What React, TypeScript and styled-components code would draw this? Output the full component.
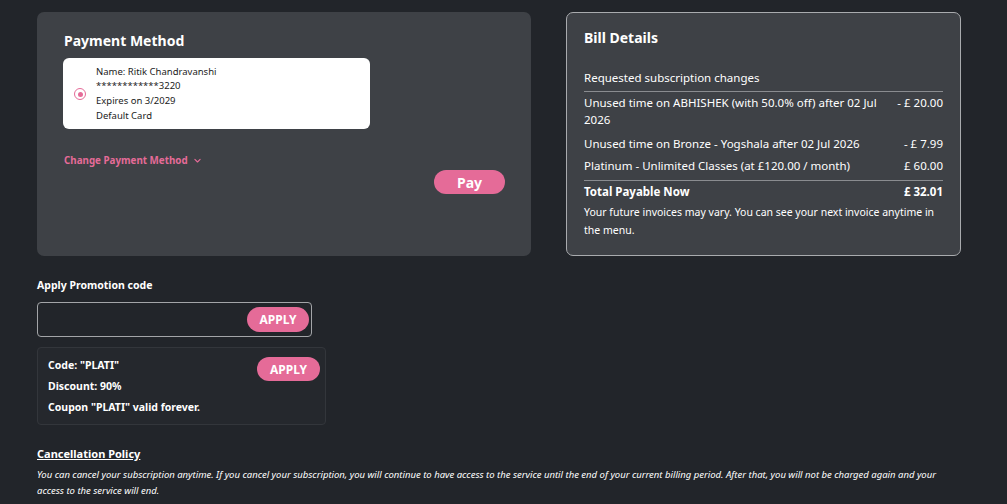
import React from "react";
import styled, { createGlobalStyle } from "styled-components";

const GlobalStyle = createGlobalStyle`
  html, body {
    margin: 0;
    padding: 0;
    background: #22252a;
    font-family: "Noto Sans", "Open Sans", sans-serif;
    color: #ffffff;
  }
`;

const Page = styled.div`
  width: 1007px;
  height: 504px;
  overflow: hidden;
  padding: 12px 0 0 37px;
  box-sizing: border-box;
`;

const TopRow = styled.div`
  display: flex;
  gap: 35px;
  align-items: flex-start;
`;

const PaymentCard = styled.section`
  width: 494px;
  height: 244px;
  box-sizing: border-box;
  background: #3e4146;
  border-radius: 7px;
  padding: 19px 26px 0 27px;
  display: flex;
  flex-direction: column;
`;

const CardTitle = styled.h2`
  margin: 0;
  font-size: 14px;
  font-weight: 700;
  line-height: 20px;
`;

const SavedCard = styled.div`
  margin-top: 7px;
  margin-left: -1px;
  width: 307px;
  height: 71px;
  box-sizing: border-box;
  background: #ffffff;
  border-radius: 6px;
  display: flex;
  align-items: center;
  padding: 1px 0 0 11px;
  color: #1b1b1b;
`;

const Radio = styled.span`
  width: 12px;
  height: 12px;
  border-radius: 50%;
  border: 1.5px solid #e56b98;
  box-sizing: border-box;
  display: flex;
  align-items: center;
  justify-content: center;
  margin-right: 10px;

  &::after {
    content: "";
    width: 5px;
    height: 5px;
    border-radius: 50%;
    background: #e56b98;
  }
`;

const CardLines = styled.div`
  display: flex;
  flex-direction: column;
  font-size: 9.5px;
  line-height: 14.6px;
`;

const ChangeLink = styled.button`
  margin-top: 25px;
  align-self: flex-start;
  background: none;
  border: none;
  padding: 0;
  color: #e56b98;
  font-family: inherit;
  font-size: 9.8px;
  font-weight: 700;
  display: flex;
  align-items: center;
  gap: 5px;
  cursor: pointer;
`;

const PayRow = styled.div`
  display: flex;
  justify-content: flex-end;
  margin-top: 3px;
`;

const PillButton = styled.button<{ $w: number; $h: number; $size: number }>`
  width: ${(p) => p.$w}px;
  height: ${(p) => p.$h}px;
  border: none;
  border-radius: 999px;
  background: #e56b98;
  color: #ffffff;
  font-family: inherit;
  font-weight: 700;
  font-size: ${(p) => p.$size}px;
  padding: 0;
  cursor: pointer;
  display: flex;
  align-items: center;
  justify-content: center;
`;

const BillCard = styled.section`
  width: 395px;
  height: 244px;
  box-sizing: border-box;
  background: #3e4146;
  border: 1px solid #a9abae;
  border-radius: 7px;
  padding: 15px 17px 0 17px;
  display: flex;
  flex-direction: column;
`;

const BillTitle = styled.h2`
  margin: 0;
  font-size: 14px;
  font-weight: 700;
  line-height: 20px;
`;

const Subhead = styled.div`
  margin-top: 21px;
  font-size: 11.5px;
  line-height: 18px;
  padding-bottom: 4px;
  border-bottom: 1px solid #8a8c90;
`;

const LineItem = styled.div<{ $bold?: boolean; $gap: number }>`
  display: flex;
  justify-content: space-between;
  gap: 20px;
  font-size: 11.5px;
  line-height: 17px;
  margin-top: ${(p) => p.$gap}px;
  font-weight: ${(p) => (p.$bold ? 700 : 400)};
`;

const Amount = styled.span`
  white-space: nowrap;
`;

const Rule = styled.div`
  margin-top: 6px;
  border-top: 1px solid #8a8c90;
`;

const Note = styled.p`
  margin: 3px 0 0;
  font-size: 10.5px;
  line-height: 18px;
`;

const PromoSection = styled.div`
  margin-top: 20px;
  width: 289px;
`;

const Label = styled.div`
  font-size: 10.5px;
  font-weight: 700;
  line-height: 18px;
`;

const PromoField = styled.div`
  margin-top: 8px;
  width: 275px;
  height: 35px;
  box-sizing: border-box;
  border: 1px solid #a3a5a8;
  border-radius: 4px;
  display: flex;
  align-items: center;
  justify-content: flex-end;
  padding-right: 2px;
`;

const PromoInput = styled.input`
  flex: 1;
  background: transparent;
  border: none;
  outline: none;
  color: #fff;
  height: 100%;
`;

const CouponBox = styled.div`
  margin-top: 10px;
  width: 289px;
  height: 78px;
  box-sizing: border-box;
  background: #25282d;
  border: 1px solid #33363b;
  border-radius: 4px;
  padding: 9px 5px 0 10px;
  display: flex;
  justify-content: space-between;
  align-items: flex-start;
`;

const CouponText = styled.div`
  display: flex;
  flex-direction: column;
  margin-top: -2px;
  font-size: 10.5px;
  font-weight: 700;
  line-height: 21px;
`;

const Policy = styled.div`
  margin-top: 21px;
`;

const PolicyTitle = styled.div`
  font-size: 11px;
  font-weight: 700;
  text-decoration: underline;
  line-height: 16px;
`;

const PolicyText = styled.p`
  margin: 5px 0 0;
  font-size: 9.5px;
  font-style: italic;
  line-height: 16px;
  width: 920px;
`;

const Chevron = () => (
  <svg width="9" height="9" viewBox="0 0 24 24" fill="none" stroke="currentColor" strokeWidth="3" strokeLinecap="round" strokeLinejoin="round">
    <polyline points="5 9 12 16 19 9" />
  </svg>
);

export default function App() {
  return (
    <>
      <GlobalStyle />
      <Page>
        <TopRow>
          <PaymentCard>
            <CardTitle>Payment Method</CardTitle>
            <SavedCard>
              <Radio />
              <CardLines>
                <span>Name: Ritik Chandravanshi</span>
                <span>************3220</span>
                <span>Expires on 3/2029</span>
                <span>Default Card</span>
              </CardLines>
            </SavedCard>
            <ChangeLink>
              Change Payment Method <Chevron />
            </ChangeLink>
            <PayRow>
              <PillButton $w={71} $h={24} $size={14}>Pay</PillButton>
            </PayRow>
          </PaymentCard>

          <BillCard>
            <BillTitle>Bill Details</BillTitle>
            <Subhead>Requested subscription changes</Subhead>
            <LineItem $gap={2}>
              <span>Unused time on ABHISHEK (with 50.0% off) after 02 Jul 2026</span>
              <Amount>- £ 20.00</Amount>
            </LineItem>
            <LineItem $gap={7}>
              <span>Unused time on Bronze - Yogshala after 02 Jul 2026</span>
              <Amount>- £ 7.99</Amount>
            </LineItem>
            <LineItem $gap={5}>
              <span>Platinum - Unlimited Classes (at £120.00 / month)</span>
              <Amount>£ 60.00</Amount>
            </LineItem>
            <Rule />
            <LineItem $bold $gap={2}>
              <span>Total Payable Now</span>
              <Amount>£ 32.01</Amount>
            </LineItem>
            <Note>Your future invoices may vary. You can see your next invoice anytime in the menu.</Note>
          </BillCard>
        </TopRow>

        <PromoSection>
          <Label>Apply Promotion code</Label>
          <PromoField>
            <PromoInput />
            <PillButton $w={62} $h={25} $size={12}>APPLY</PillButton>
          </PromoField>
          <CouponBox>
            <CouponText>
              <span>Code: "PLATI"</span>
              <span>Discount: 90%</span>
              <span>Coupon "PLATI" valid forever.</span>
            </CouponText>
            <PillButton $w={63} $h={24} $size={12}>APPLY</PillButton>
          </CouponBox>
        </PromoSection>

        <Policy>
          <PolicyTitle>Cancellation Policy</PolicyTitle>
          <PolicyText>
            You can cancel your subscription anytime. If you cancel your subscription, you will continue to have access to the service until the end of your current billing period. After that, you will not be charged again and your access to the service will end.
          </PolicyText>
        </Policy>
      </Page>
    </>
  );
}
